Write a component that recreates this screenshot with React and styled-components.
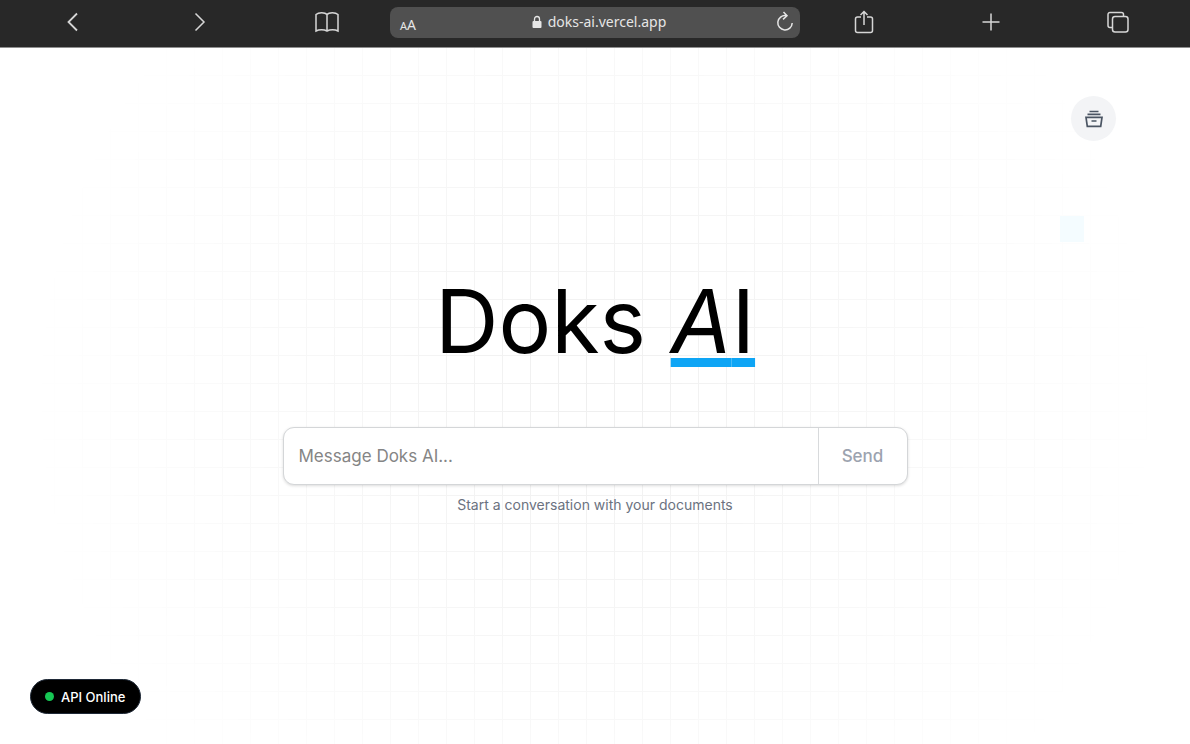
import styled, { createGlobalStyle } from 'styled-components';

const GlobalStyle = createGlobalStyle`
  * {
    box-sizing: border-box;
  }
  body {
    margin: 0;
    background: #fff;
    font-family: Inter, "Liberation Sans", sans-serif;
  }
  button, input {
    font: inherit;
  }
`;

const Page = styled.div`
  display: flex;
  flex-direction: column;
  min-height: 100vh;
`;

const BrowserBar = styled.nav`
  display: flex;
  align-items: center;
  height: 48px;
  padding: 0 9px 3px;
  border-bottom: 1px solid #8f8f8f;
  background: #282828;
  color: #d6d6d6;
  font-family: "Noto Sans", sans-serif;
`;

const Slot = styled.div`
  flex: 1;
  display: flex;
  justify-content: center;
`;

const BarButton = styled.button`
  display: flex;
  padding: 0;
  border: 0;
  background: none;
  color: inherit;
`;

const Icon = styled.svg`
  display: block;
  width: ${(props) => props.$size || 26}px;
  height: ${(props) => props.$size || 26}px;
  fill: none;
  stroke: currentColor;
  stroke-width: ${(props) => props.$stroke || 1.5};
`;

const AddressBar = styled.div`
  display: flex;
  align-items: center;
  justify-content: space-between;
  width: 410px;
  height: 31px;
  padding: 0 4px 0 10px;
  border-radius: 8px;
  background: #505050;
  color: #e6e6e6;
`;

const TextSize = styled.button`
  width: 24px;
  padding: 6px 0 0;
  border: 0;
  background: none;
  color: inherit;
  font-size: 14px;
  line-height: 18px;
  text-align: left;

  small {
    font-size: 11px;
  }
`;

const Address = styled.span`
  display: flex;
  align-items: center;
  gap: 6px;
  font-size: 14px;
  line-height: 20px;
`;

const Main = styled.main`
  position: relative;
  flex: 1;
  display: flex;
  flex-direction: column;
  justify-content: space-between;
`;

const Grid = styled.div`
  position: absolute;
  inset: 0;
  z-index: -1;
  background-image:
    linear-gradient(to left, #efefef 1px, transparent 1px),
    linear-gradient(to top, #efefef 1px, transparent 1px);
  background-size: 28px 28px;
  background-position: calc(50% + 6px) 0;
  mask-image: radial-gradient(circle at center, #000 0, transparent 570px);
`;

const GlowCell = styled.div`
  position: absolute;
  top: 168px;
  left: calc(50% + 465px);
  z-index: -1;
  width: 24px;
  height: 26px;
  background: #f4fcff;
`;

const Header = styled.header`
  display: flex;
  justify-content: flex-end;
  padding: 48px 74px 0;
`;

const ArchiveButton = styled.button`
  display: flex;
  align-items: center;
  justify-content: center;
  width: 45px;
  height: 45px;
  padding: 0;
  border: 0;
  border-radius: 50%;
  background: #f3f4f6;
  color: #4b5563;
`;

const Hero = styled.section`
  display: flex;
  flex-direction: column;
  align-items: center;
  padding: 0 24px 44px;
`;

const Title = styled.h1`
  margin: 0 0 46px;
  color: #000;
  font-size: 88px;
  font-weight: 400;
  line-height: 120px;
`;

const Accent = styled.span`
  text-decoration: underline;
  text-decoration-color: #0ea5f5;
  text-decoration-thickness: 9px;
`;

const MessageForm = styled.form`
  display: flex;
  width: 100%;
  max-width: 625px;
  height: 58px;
  border: 1px solid #d4d6d8;
  border-radius: 11px;
  background: #fff;
  box-shadow: 0 1px 3px rgba(0, 0, 0, 0.14);
`;

const MessageInput = styled.input`
  flex: 1;
  min-width: 0;
  padding: 0 15px;
  border: 0;
  border-radius: 11px 0 0 11px;
  background: transparent;
  outline: none;
  font-size: 17px;

  &::placeholder {
    color: #858585;
    opacity: 1;
  }
`;

const SendButton = styled.button`
  width: 89px;
  padding: 0;
  border: 0;
  border-left: 1px solid #d8dadc;
  background: none;
  color: #9ca3af;
  font-size: 17px;
  font-weight: 500;
`;

const Hint = styled.p`
  margin: 10px 0 0;
  color: #6b7280;
  font-size: 14px;
  line-height: 20px;
`;

const Footer = styled.footer`
  display: flex;
  padding: 0 30px 30px;
`;

const Status = styled.div`
  display: flex;
  align-items: center;
  gap: 7px;
  height: 35px;
  padding: 0 15px 0 14px;
  border: 1px solid #1f2937;
  border-radius: 18px;
  background: #000;
  color: #fff;
  font-size: 13px;
  font-weight: 500;
`;

const Dot = styled.span`
  width: 9px;
  height: 9px;
  border-radius: 50%;
  background: #16c754;
`;

const App = () => {
  return (
    <Page>
      <GlobalStyle />
      <BrowserBar>
        <Slot>
          <BarButton aria-label="Back">
            <Icon $stroke={1.8} viewBox="0 0 26 26"><path d="M17 4.500 8.500 13l8.500 8.500" /></Icon>
          </BarButton>
        </Slot>
        <Slot>
          <BarButton aria-label="Forward">
            <Icon viewBox="0 0 26 26"><path d="m8.500 4.500 8.500 8.500-8.500 8.500" /></Icon>
          </BarButton>
        </Slot>
        <Slot>
          <BarButton aria-label="Bookmarks">
            <Icon viewBox="0 0 26 26">
              <path d="M13 5.500C11 3 4.500 3 2 5.500V22c3-1.800 8-1.800 11 0 3-1.800 8-1.800 11 0V5.500C21.500 3 15 3 13 5.500Zm0 0V22" />
            </Icon>
          </BarButton>
        </Slot>
        <AddressBar>
          <TextSize aria-label="Text size"><small>A</small>A</TextSize>
          <Address>
            <svg width="10" height="14" viewBox="0 0 10 14">
              <rect x="0.500" y="6" width="9" height="7" rx="1" fill="currentColor" />
              <path d="M2.500 6V4a2.500 2.500 0 0 1 5 0v2" fill="none" stroke="currentColor" strokeWidth="1.300" />
            </svg>
            doks-ai.vercel.app
          </Address>
          <BarButton aria-label="Reload">
            <Icon $size={22} viewBox="0 0 22 22">
              <path d="M12 4.600A7.200 7.200 0 1 0 18.200 12M9.500 1l3.500 3.700-4 3.700" />
            </Icon>
          </BarButton>
        </AddressBar>
        <Slot>
          <BarButton aria-label="Share">
            <Icon viewBox="0 0 26 26">
              <path d="M10 8H6.500A2 2 0 0 0 4.500 10v11.500a2 2 0 0 0 2 2h13a2 2 0 0 0 2-2V10a2 2 0 0 0-2-2H16M13 16V2.500M9.500 6 13 2.500 16.500 6" />
            </Icon>
          </BarButton>
        </Slot>
        <Slot>
          <BarButton aria-label="New tab">
            <Icon viewBox="0 0 26 26"><path d="M13 4.500v17M4.500 13h17" /></Icon>
          </BarButton>
        </Slot>
        <Slot>
          <BarButton aria-label="Tabs">
            <Icon viewBox="0 0 26 26">
              <rect x="7.500" y="7.500" width="15.500" height="15.500" rx="2.500" />
              <path d="M7.500 18.500H5a2 2 0 0 1-2-2V5.500a2 2 0 0 1 2-2h11.500a2 2 0 0 1 2 2v2" />
            </Icon>
          </BarButton>
        </Slot>
      </BrowserBar>
      <Main>
        <Grid />
        <GlowCell />
        <Header>
          <ArchiveButton aria-label="Archive">
            <Icon $size={20} $stroke={1.7} viewBox="0 0 20 20">
              <path d="M5.500 2.500h9M3.500 5.300h13M2 8.300h16l-1.300 9H3.300ZM7.500 12h5" />
            </Icon>
          </ArchiveButton>
        </Header>
        <Hero>
          <Title>Doks <Accent><em>A</em>I</Accent></Title>
          <MessageForm>
            <MessageInput aria-label="Message" placeholder="Message Doks AI..." />
            <SendButton type="button">Send</SendButton>
          </MessageForm>
          <Hint>Start a conversation with your documents</Hint>
        </Hero>
        <Footer>
          <Status><Dot />API Online</Status>
        </Footer>
      </Main>
    </Page>
  );
};

export default App;
